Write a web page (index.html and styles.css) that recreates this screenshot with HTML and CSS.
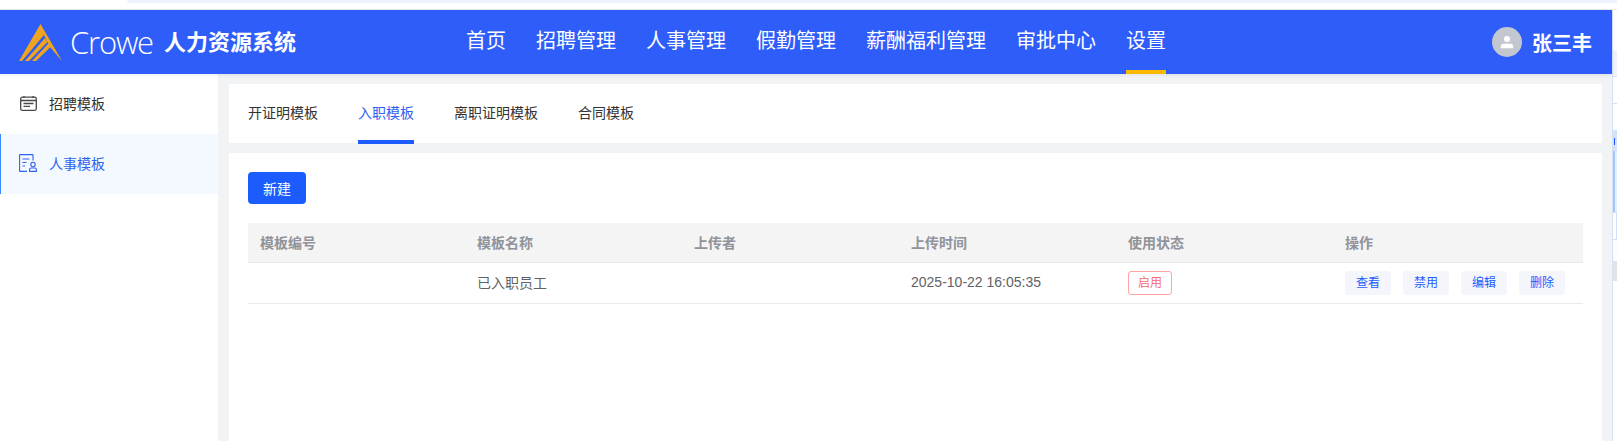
FILE: index.html
```html
<!DOCTYPE html>
<html lang="zh-CN">
<head>
    <meta charset="UTF-8">
    <meta name="viewport" content="width=device-width, initial-scale=1.0">
    <title>人力资源系统</title>
    <link rel="stylesheet" href="styles.css">
</head>
<body>
    <div class="browser-top"><div class="browser-strip"></div></div>
    <div class="window">
        <div class="app">
            <header class="header">
                <div class="brand">
                    <svg class="brand-mark" width="43" height="37" viewBox="0 0 43 37">
                        <path fill="#f0a31e" d="M21.500 0 L43 37 L31 23 L25 11 L3 37 L0 37 Z"/>
                        <path fill="#f0a31e" d="M26 14 L6 37 L10 37 L28.500 18 Z"/>
                        <path fill="#f0a31e" d="M29.500 19.500 L13 37 L17 37 L31.500 23 Z"/>
                    </svg>
                    <span class="brand-name">Crowe</span>
                    <span class="brand-title">人力资源系统</span>
                </div>
                <nav class="nav">
                    <a class="nav-item">首页</a>
                    <a class="nav-item">招聘管理</a>
                    <a class="nav-item">人事管理</a>
                    <a class="nav-item">假勤管理</a>
                    <a class="nav-item">薪酬福利管理</a>
                    <a class="nav-item">审批中心</a>
                    <a class="nav-item active">设置</a>
                </nav>
                <div class="user">
                    <span class="avatar">
                        <svg width="14" height="14" viewBox="0 0 16 16">
                            <circle cx="8" cy="4.500" r="3.500" fill="#fff"/>
                            <path fill="#fff" d="M1 15 V12.500 Q1 10 4 10 H12 Q15 10 15 12.500 V15 Z"/>
                        </svg>
                    </span>
                    <span class="user-name">张三丰</span>
                </div>
            </header>
            <div class="layout">
                <aside class="sidebar">
                    <div class="side-item">
                        <svg width="17" height="15" viewBox="0 0 17 15" fill="none" stroke="#484848" stroke-width="1.300">
                            <rect x="0.700" y="1.200" width="15.600" height="13.100" rx="1.500"/>
                            <path d="M1 4.500 H16 M4 0 V2 M13 0 V2"/>
                            <path d="M3.500 7.500 H13.500 M3.500 10.300 H10"/>
                        </svg>
                        <span>招聘模板</span>
                    </div>
                    <div class="side-item active">
                        <svg width="18" height="18" viewBox="0 0 18 18" fill="none" stroke="#2e62f0" stroke-width="1.100">
                            <path d="M14 6.500 V1 Q14 0.600 13.500 0.600 H1 Q0.600 0.600 0.600 1 V17 Q0.600 17.400 1 17.400 H8"/>
                            <path d="M3.500 5 H10.500 M3.500 8.500 H7.500 M3.500 12 H6"/>
                            <circle cx="14" cy="10.500" r="2.200"/>
                            <path d="M10.600 17.400 V15.500 Q10.600 14 12 14 H16 Q17.400 14 17.400 15.500 V17.400 Z"/>
                        </svg>
                        <span>人事模板</span>
                    </div>
                </aside>
                <main class="content">
                    <div class="tabs">
                        <a class="tab">开证明模板</a>
                        <a class="tab active">入职模板</a>
                        <a class="tab">离职证明模板</a>
                        <a class="tab">合同模板</a>
                    </div>
                    <section class="panel">
                        <button class="btn-new">新建</button>
                        <table class="table">
                            <thead>
                                <tr>
                                    <th>模板编号</th>
                                    <th>模板名称</th>
                                    <th>上传者</th>
                                    <th>上传时间</th>
                                    <th>使用状态</th>
                                    <th>操作</th>
                                </tr>
                            </thead>
                            <tbody>
                                <tr>
                                    <td></td>
                                    <td class="cell-text">已入职员工</td>
                                    <td></td>
                                    <td class="cell-text">2025-10-22 16:05:35</td>
                                    <td><span class="tag">启用</span></td>
                                    <td>
                                        <div class="actions">
                                            <a class="action">查看</a>
                                            <a class="action">禁用</a>
                                            <a class="action">编辑</a>
                                            <a class="action">删除</a>
                                        </div>
                                    </td>
                                </tr>
                            </tbody>
                        </table>
                    </section>
                </main>
            </div>
        </div>
        <div class="edge">
            <div class="edge-a"></div>
            <div class="edge-b"></div>
            <div class="edge-c"></div>
            <div class="edge-c"></div>
            <div class="edge-box"></div>
            <div class="edge-bar"></div>
            <div class="edge-e"></div>
            <div class="edge-g"></div>
            <div class="edge-f"></div>
        </div>
    </div>
</body>
</html>
```

FILE: styles.css
```css
* {
    box-sizing: border-box;
}

html, body {
    margin: 0;
    height: 441px;
    overflow: hidden;
}

body {
    display: flex;
    flex-direction: column;
    background: #fff;
    font-family: "Liberation Sans", "Noto Sans CJK SC", sans-serif;
    font-size: 14px;
    color: #333;
}

.browser-top {
    height: 10px;
    padding-left: 127px;
    border-bottom: 1px solid #e9e9e9;
}

.browser-strip {
    height: 3px;
    background: #eef3fd;
    border-bottom-left-radius: 4px;
}

.window {
    flex: 1;
    display: flex;
    min-height: 0;
}

.app {
    flex: 1;
    display: flex;
    flex-direction: column;
    min-width: 0;
    background: #f1f3f5;
}

/* header */
.header {
    height: 64px;
    display: flex;
    align-items: center;
    background: #2e5df9;
    color: #fff;
    box-shadow: 0 1px 4px rgba(0, 0, 0, 0.08);
    position: relative;
}

.brand {
    width: 466px;
    display: flex;
    align-items: center;
    padding-left: 19px;
}

.brand-mark {
    margin-top: 1px;
}

.brand-name {
    margin-left: 8px;
    font-family: "Open Sans", sans-serif;
    font-weight: 300;
    font-size: 31px;
    letter-spacing: -1.200px;
}

.brand-title {
    margin-left: 11px;
    margin-bottom: 4px;
    font-size: 22px;
    font-weight: 700;
}

.nav {
    flex: 1;
    display: flex;
    gap: 30px;
    height: 100%;
}

.nav-item {
    display: flex;
    align-items: center;
    padding-bottom: 2px;
    font-size: 20px;
    border-bottom: 4px solid transparent;
}

.nav-item.active {
    border-bottom-color: #fdb900;
}

.user {
    display: flex;
    align-items: center;
    gap: 10px;
    padding-right: 20px;
}

.avatar {
    width: 30px;
    height: 30px;
    border-radius: 50%;
    background: #c3c7cf;
    display: flex;
    align-items: center;
    justify-content: center;
}

.user-name {
    font-size: 20px;
    font-weight: 700;
}

.layout {
    flex: 1;
    display: flex;
    min-height: 0;
}

/* sidebar */
.sidebar {
    width: 218px;
    background: #fff;
}

.side-item {
    height: 60px;
    display: flex;
    align-items: center;
    padding-left: 20px;
    padding-bottom: 2px;
    gap: 12px;
}

.side-item.active {
    background: #f4f8ff;
    border-left: 1px solid #3d8bff;
    padding-left: 18px;
    color: #2e62f0;
}

/* content */
.content {
    flex: 1;
    min-width: 0;
    display: flex;
    flex-direction: column;
    gap: 10px;
    padding: 10px 10px 0 11px;
}

.tabs {
    height: 59px;
    flex-shrink: 0;
    display: flex;
    gap: 40px;
    padding-left: 19px;
    background: #fff;
}

.tab {
    height: 60px;
    display: flex;
    align-items: center;
    border-bottom: 4px solid transparent;
}

.tab.active {
    color: #2e62f0;
    border-bottom-color: #1c5cff;
}

.panel {
    flex: 1;
    padding: 19px 19px 0;
    background: #fff;
}

.btn-new {
    display: block;
    width: 58px;
    height: 32px;
    padding: 0;
    border: 0;
    border-radius: 4px;
    background: #1c5cff;
    color: #fff;
    font-family: inherit;
    font-size: 14px;
}

/* table */
.table {
    width: 100%;
    margin-top: 19px;
    border-collapse: separate;
    border-spacing: 0;
    table-layout: fixed;
}

.table th {
    width: 217px;
    height: 40px;
    padding: 0 12px 2px;
    background: #f4f4f5;
    border-bottom: 1px solid #e8eaf0;
    text-align: left;
    font-size: 14px;
    font-weight: 700;
    color: #909399;
}

.table th:last-child {
    width: auto;
}

.table td {
    height: 41px;
    padding: 0 12px;
    border-bottom: 1px solid #e8eaf0;
    color: #606266;
}

.table td.cell-text {
    padding-bottom: 3px;
}

.tag {
    display: block;
    width: 44px;
    height: 24px;
    line-height: 22px;
    text-align: center;
    border: 1px solid #ffa3a3;
    border-radius: 3px;
    font-size: 12px;
    color: #f56c6c;
}

.actions {
    display: flex;
    gap: 12px;
}

.action {
    width: 46px;
    height: 24px;
    line-height: 24px;
    text-align: center;
    border-radius: 3px;
    background: #f4f6fb;
    font-size: 12px;
    color: #1c5cff;
}

/* strip of the neighbouring window at the right edge */
.edge {
    width: 5px;
    flex-shrink: 0;
    background: #fff;
    border-left: 1px solid #d4e0f8;
    display: flex;
    flex-direction: column;
}

.edge-a {
    height: 40px;
}

.edge-b {
    height: 27px;
    background: #eff3fc;
    border-bottom: 1px solid #d4e0f8;
}

.edge-c {
    height: 27px;
    border-bottom: 1px solid #d4e0f8;
}

.edge-box {
    height: 20px;
    background: #d3e1f9;
    position: relative;
}

.edge-box::after {
    content: "";
    position: absolute;
    left: 1px;
    top: 7px;
    width: 1px;
    height: 7px;
    background: #1c5cff;
}

.edge-bar {
    height: 61px;
    background: linear-gradient(to right, #a9c5f5 2px, #e4edfb 2px);
}

.edge-e {
    height: 28px;
    border: 1px solid #d4e0f8;
    border-left: 0;
}

.edge-g {
    height: 21px;
    background: #fbfcff;
}

.edge-f {
    height: 20px;
    background: #e2e3e3;
}
```
